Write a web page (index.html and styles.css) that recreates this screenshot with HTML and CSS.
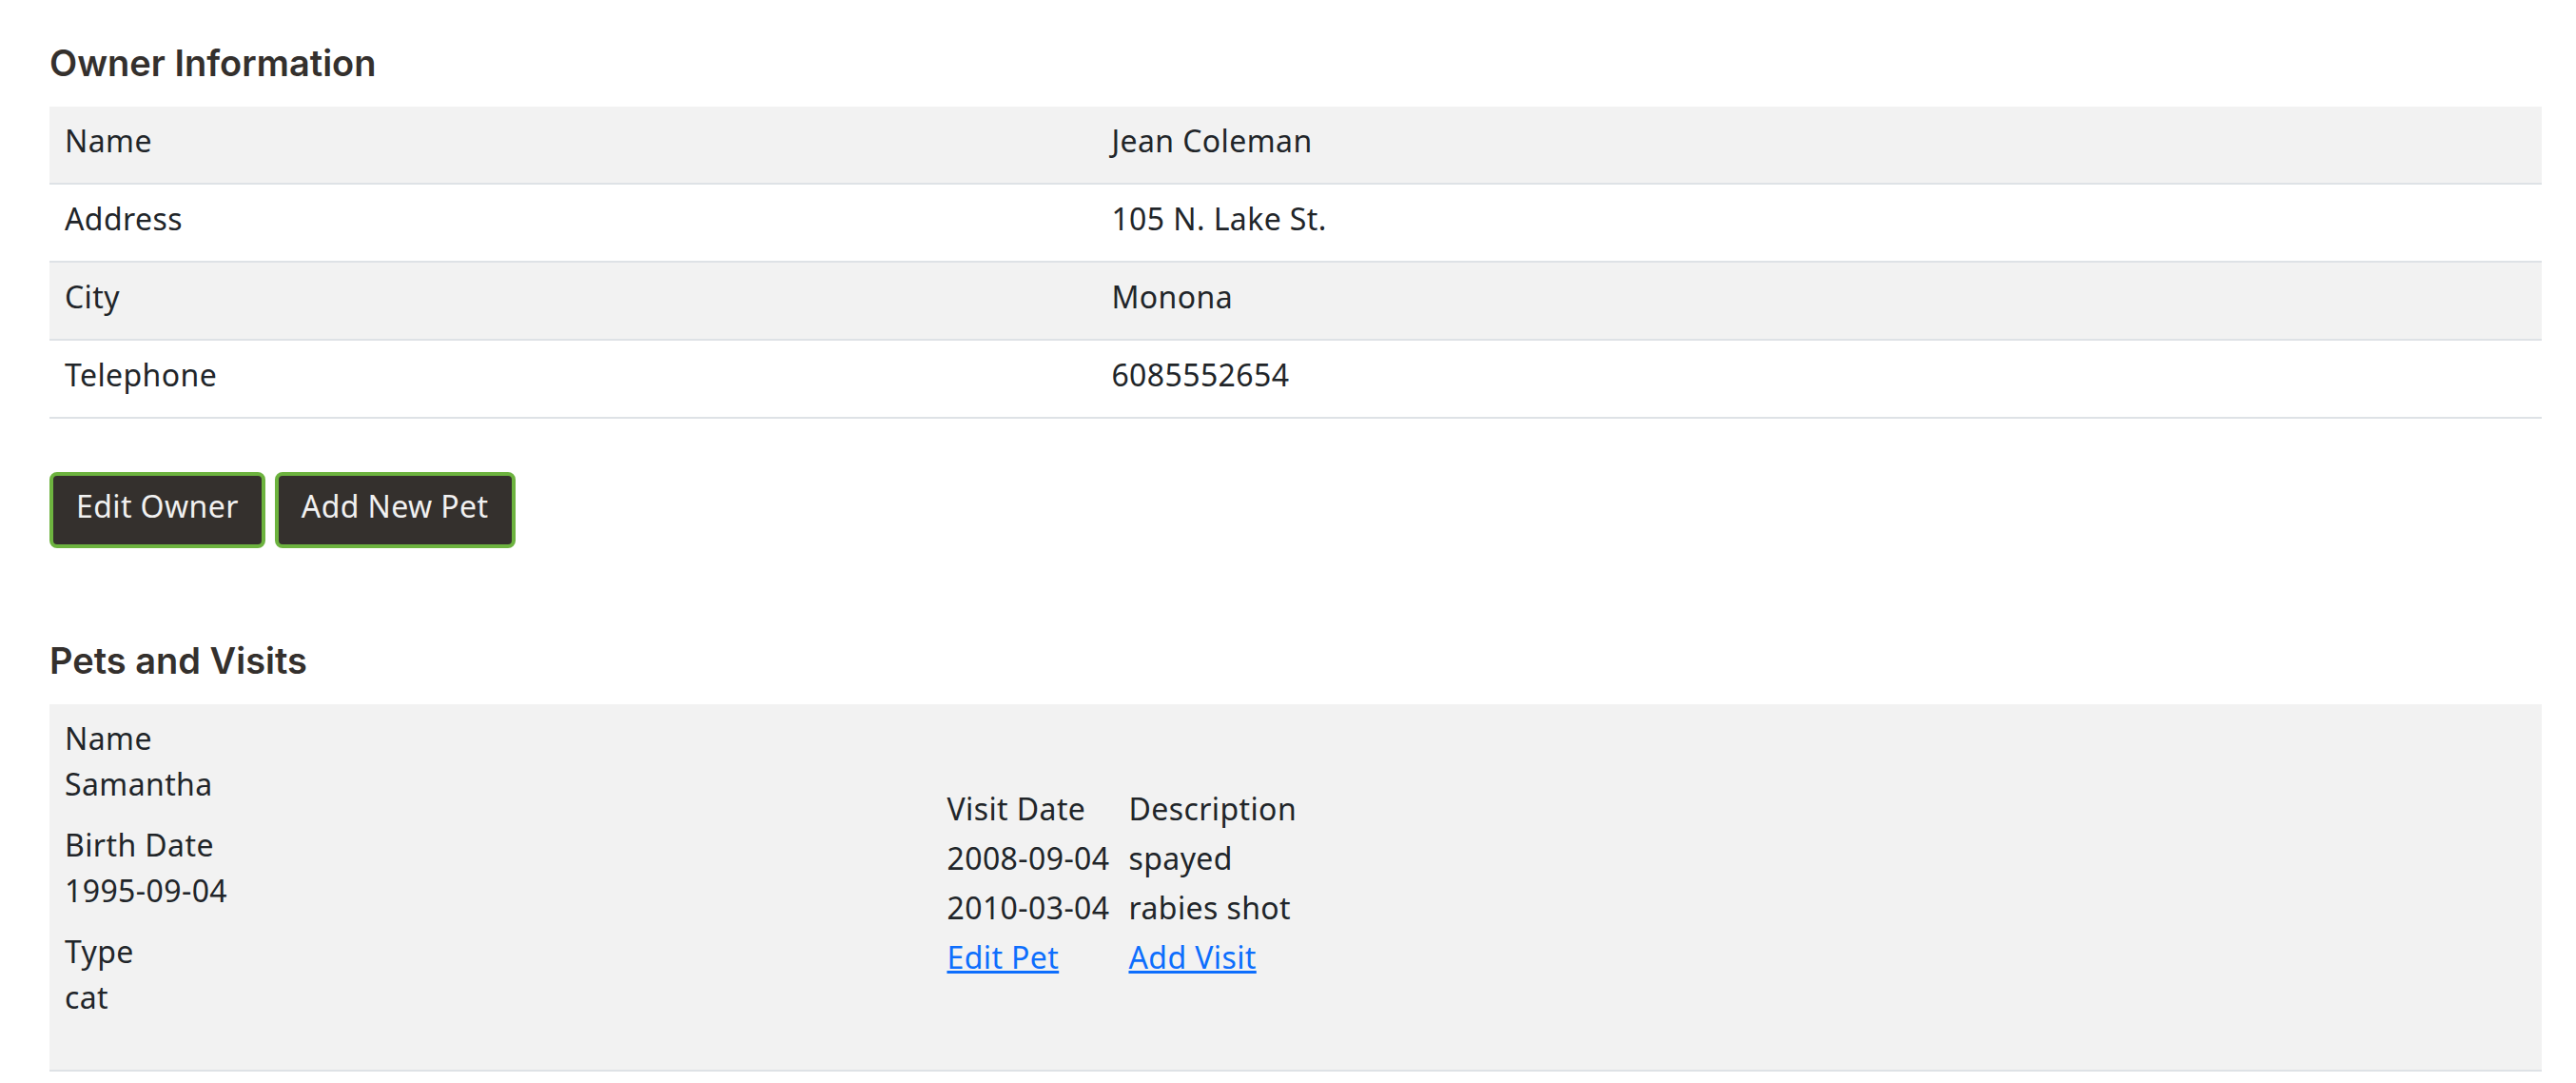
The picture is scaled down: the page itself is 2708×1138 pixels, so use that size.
FILE: index.html
```html
<!DOCTYPE html>
<html lang="en">
<head>
    <meta charset="UTF-8">
    <title>PetClinic :: Owner</title>
    <link rel="stylesheet" href="styles.css">
</head>
<body>
    <div class="container">
        <h2>Owner Information</h2>

        <table class="table table-striped owner-table">
            <colgroup>
                <col class="label-col">
                <col>
            </colgroup>
            <tr>
                <th>Name</th>
                <td>Jean Coleman</td>
            </tr>
            <tr>
                <th>Address</th>
                <td>105 N. Lake St.</td>
            </tr>
            <tr>
                <th>City</th>
                <td>Monona</td>
            </tr>
            <tr>
                <th>Telephone</th>
                <td>6085552654</td>
            </tr>
        </table>

        <div class="actions">
            <a href="#" class="btn">Edit Owner</a>
            <a href="#" class="btn">Add New Pet</a>
        </div>

        <h2>Pets and Visits</h2>

        <table class="table table-striped pets-table">
            <colgroup>
                <col class="pet-col">
                <col>
            </colgroup>
            <tr>
                <td class="pet-info">
                    <dl>
                        <dt>Name</dt>
                        <dd>Samantha</dd>
                        <dt>Birth Date</dt>
                        <dd>1995-09-04</dd>
                        <dt>Type</dt>
                        <dd>cat</dd>
                    </dl>
                </td>
                <td class="pet-visits">
                    <table class="visits">
                        <thead>
                            <tr>
                                <th class="date-col">Visit Date</th>
                                <th>Description</th>
                            </tr>
                        </thead>
                        <tbody>
                            <tr>
                                <td class="date-col">2008-09-04</td>
                                <td>spayed</td>
                            </tr>
                            <tr>
                                <td class="date-col">2010-03-04</td>
                                <td>rabies shot</td>
                            </tr>
                            <tr>
                                <td class="date-col"><a href="#">Edit Pet</a></td>
                                <td><a href="#">Add Visit</a></td>
                            </tr>
                        </tbody>
                    </table>
                </td>
            </tr>
        </table>
    </div>
</body>
</html>
```
FILE: styles.css
```css
body {
    margin: 0;
    font-family: "Noto Sans", sans-serif;
    font-size: 32px;
    line-height: 48px;
    letter-spacing: 0.4px;
    color: #212529;
    background-color: #fff;
}

.container {
    padding: 45px 36px 0 52px;
}

h2 {
    font-family: Inter, sans-serif;
    font-size: 38px;
    font-weight: 600;
    line-height: 43px;
    letter-spacing: 0;
    color: #34302d;
    margin: 0 0 24px;
}

.table {
    width: 100%;
    border-collapse: collapse;
}

.table > tbody > tr > th,
.table > tbody > tr > td {
    padding: 12px 16px 20px;
    border-bottom: 2px solid #dee2e6;
    text-align: left;
    font-weight: normal;
    vertical-align: top;
}

.table-striped > tbody > tr:nth-child(odd) > th,
.table-striped > tbody > tr:nth-child(odd) > td {
    background-color: #f2f2f2;
}

.owner-table {
    margin-bottom: 56px;
}

.label-col {
    width: 42%;
}

.pet-col {
    width: 35.4%;
}

.actions {
    display: flex;
    gap: 10px;
    margin-bottom: 97px;
}

.btn {
    display: inline-block;
    padding: 8px 24px 16px;
    background-color: #34302d;
    color: #f1f1f1;
    border: 4px solid #6db33f;
    border-radius: 8px;
    text-decoration: none;
}

dl {
    margin: 0;
    padding-bottom: 16px;
}

dt {
    font-weight: normal;
}

dd {
    margin: 0 0 16px;
}

.table > tbody > tr > td.pet-visits {
    vertical-align: middle;
}

.visits {
    border-collapse: collapse;
}

.visits th,
.visits td {
    padding: 2px 0;
    text-align: left;
    font-weight: normal;
}

.visits .date-col {
    width: 191px;
}

.visits a {
    color: #0d6efd;
}
```
